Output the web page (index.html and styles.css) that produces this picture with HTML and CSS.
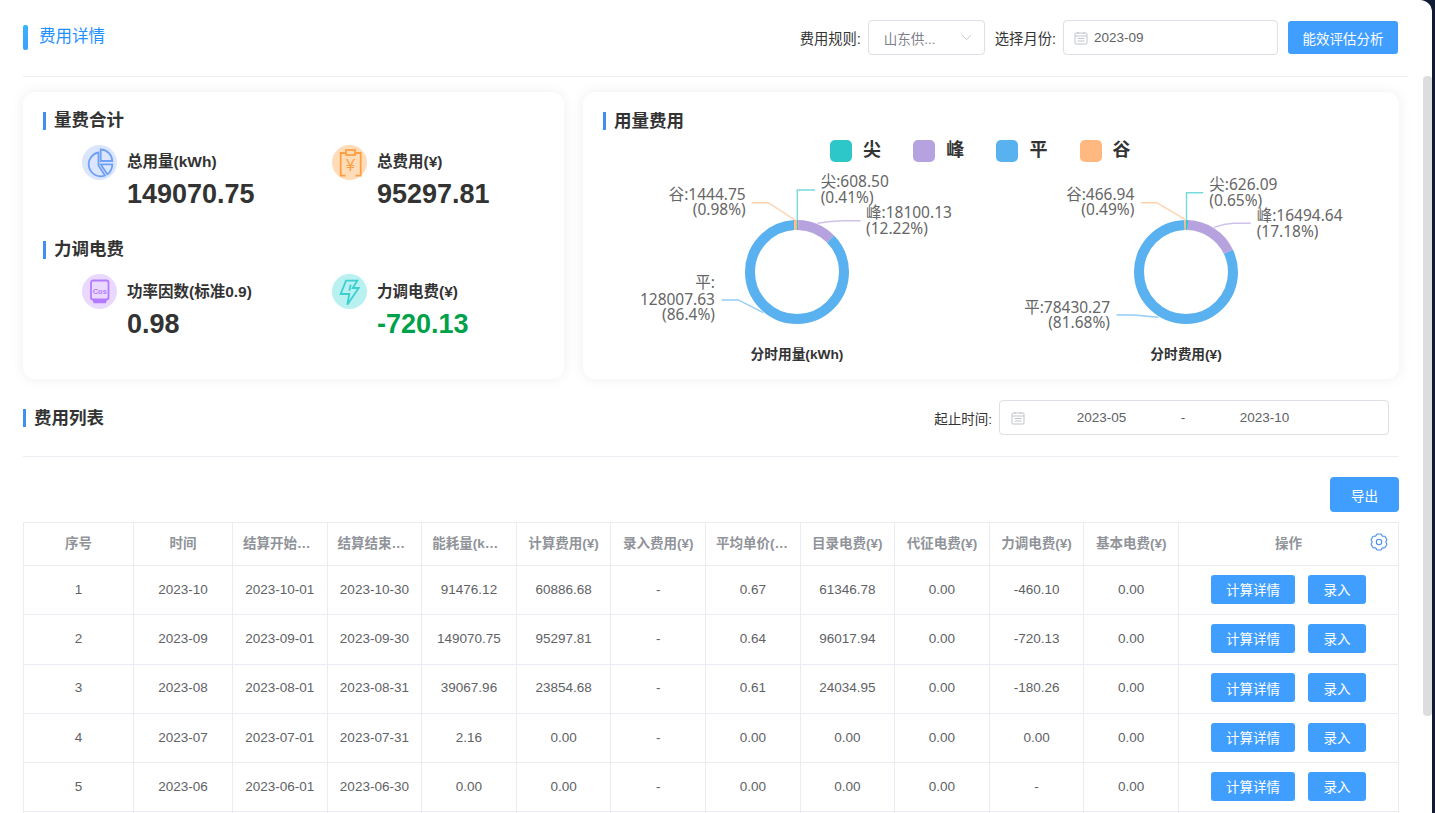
FILE: index.html
```html
<!DOCTYPE html>
<html lang="zh-CN">
<head>
    <meta charset="UTF-8">
    <title>费用详情</title>
    <link rel="stylesheet" href="styles.css">
</head>
<body>
<div class="page">
    <div class="scroll-thumb"></div>

    <div class="page-head">
        <div class="page-title">费用详情</div>
        <div class="head-tools">
            <span class="field-label">费用规则:</span>
            <div class="select-box">
                <span>山东供...</span>
                <svg class="chevron" viewBox="0 0 12 8"><polyline points="1,1 6,6.5 11,1"/></svg>
            </div>
            <span class="field-label label-next">选择月份:</span>
            <div class="month-box">
                <svg class="cal-icon" viewBox="0 0 14 14"><rect x="1" y="2" width="12" height="11" rx="1"/><path d="M1 5h12M4 1v2M10 1v2M3.5 7.5h7M3.5 10h7"/></svg>
                <span>2023-09</span>
            </div>
            <button class="btn btn-analyze">能效评估分析</button>
        </div>
    </div>

    <div class="cards">
        <div class="card card-left">
            <div class="sub-title">量费合计</div>
            <div class="stat-grid">
                <div class="stat">
                    <svg class="stat-icon icon-blue" viewBox="0 0 35 35">
                        <circle class="disc" cx="17.5" cy="17.5" r="17.5"/>
                        <path d="M16.5 7.5A12 12 0 1 0 23 30.5L16.5 20.5z"/>
                        <path d="M18.7 4.5A12 12 0 0 1 30.3 16H18.7z"/>
                        <path d="M18.7 19.3H30.3A12 12 0 0 1 25.3 29.3z"/>
                    </svg>
                    <div>
                        <div class="stat-label">总用量(kWh)</div>
                        <div class="stat-value">149070.75</div>
                    </div>
                </div>
                <div class="stat">
                    <svg class="stat-icon icon-orange" viewBox="0 0 35 35">
                        <circle class="disc" cx="17.5" cy="17.5" r="17.5"/>
                        <path d="M13.5 8H8.7V30.7H13.5M23.5 8H28.7V30.7H23.5"/>
                        <rect x="14" y="5" width="9" height="5"/>
                        <text class="icon-text yen" x="18.5" y="26">¥</text>
                    </svg>
                    <div>
                        <div class="stat-label">总费用(¥)</div>
                        <div class="stat-value">95297.81</div>
                    </div>
                </div>
            </div>

            <div class="sub-title sub-title-next">力调电费</div>
            <div class="stat-grid stat-grid-low">
                <div class="stat">
                    <svg class="stat-icon icon-purple" viewBox="0 0 35 35">
                        <circle class="disc" cx="17.5" cy="17.5" r="17.5"/>
                        <rect x="9" y="6.5" width="17.5" height="19" rx="2"/>
                        <path class="solid" d="M10.5 25.5h14.5l-1 3.8h-12.5z"/>
                        <text class="icon-text cos" x="17.8" y="19.5">Cos</text>
                    </svg>
                    <div>
                        <div class="stat-label">功率因数(标准0.9)</div>
                        <div class="stat-value">0.98</div>
                    </div>
                </div>
                <div class="stat">
                    <svg class="stat-icon icon-cyan" viewBox="0 0 35 35">
                        <circle class="disc" cx="17.5" cy="17.5" r="17.5"/>
                        <path d="M14 6.7H25.3L20.7 14H26.7L15.3 30.7 17.3 20H8.7z"/>
                        <path d="M18.7 10.7L17.3 16.7"/>
                    </svg>
                    <div>
                        <div class="stat-label">力调电费(¥)</div>
                        <div class="stat-value value-green">-720.13</div>
                    </div>
                </div>
            </div>
        </div>

        <div class="card card-right">
            <div class="sub-title title-low">用量费用</div>
            <div class="legend">
                <span class="legend-item"><i class="dot c-jian"></i>尖</span>
                <span class="legend-item"><i class="dot c-feng"></i>峰</span>
                <span class="legend-item"><i class="dot c-ping"></i>平</span>
                <span class="legend-item"><i class="dot c-gu"></i>谷</span>
            </div>
            <div class="charts">
                <svg class="pie" viewBox="0 0 389 200">
                    <g class="ring" transform="rotate(-90 194 106)">
                        <circle class="s-ping" cx="194" cy="106" r="47" pathLength="100" stroke-dasharray="86.4 100" stroke-dashoffset="-12.63"/>
                        <circle class="s-jian" cx="194" cy="106" r="47" pathLength="100" stroke-dasharray="0.41 100"/>
                        <circle class="s-feng" cx="194" cy="106" r="47" pathLength="100" stroke-dasharray="12.22 100" stroke-dashoffset="-0.41"/>
                        <circle class="s-gu" cx="194" cy="106" r="47" pathLength="100" stroke-dasharray="0.98 100" stroke-dashoffset="-99.03"/>
                    </g>
                    <path class="lead s-jian" d="M194.3 54V24H212"/>
                    <path class="lead s-gu" d="M192 54L165.3 36.7H148.7"/>
                    <path class="lead s-feng" d="M214.3 57.3Q228 55 240.3 54.7H257.7"/>
                    <path class="lead s-ping" d="M160.3 146.7L135.3 134H118.7"/>
                    <text class="pie-label" x="217.7" y="20.5">尖:608.50</text>
                    <text class="pie-label" x="217.7" y="36.8">(0.41%)</text>
                    <text class="pie-label to-end" x="142.7" y="34.1">谷:1444.75</text>
                    <text class="pie-label to-end" x="142.7" y="49.1">(0.98%)</text>
                    <text class="pie-label" x="263" y="52.1">峰:18100.13</text>
                    <text class="pie-label" x="263" y="68.1">(12.22%)</text>
                    <text class="pie-label to-end" x="112" y="121.5">平:</text>
                    <text class="pie-label to-end" x="112" y="138.8">128007.63</text>
                    <text class="pie-label to-end" x="112" y="153.8">(86.4%)</text>
                    <text class="pie-caption" x="194" y="193">分时用量(kWh)</text>
                </svg>
                <svg class="pie" viewBox="0 0 389 200">
                    <g class="ring" transform="rotate(-90 194 106)">
                        <circle class="s-ping" cx="194" cy="106" r="47" pathLength="100" stroke-dasharray="81.68 100" stroke-dashoffset="-17.83"/>
                        <circle class="s-jian" cx="194" cy="106" r="47" pathLength="100" stroke-dasharray="0.65 100"/>
                        <circle class="s-feng" cx="194" cy="106" r="47" pathLength="100" stroke-dasharray="17.18 100" stroke-dashoffset="-0.65"/>
                        <circle class="s-gu" cx="194" cy="106" r="47" pathLength="100" stroke-dasharray="0.49 100" stroke-dashoffset="-99.51"/>
                    </g>
                    <path class="lead s-jian" d="M194.5 54V26.7H211.3"/>
                    <path class="lead s-gu" d="M193 53.3L164.7 36.7H148.7"/>
                    <path class="lead s-feng" d="M222 61.3Q232 58 241.3 57.3H258.7"/>
                    <path class="lead s-ping" d="M166.3 151.3L141.3 149H124.7"/>
                    <text class="pie-label" x="217.3" y="24.1">尖:626.09</text>
                    <text class="pie-label" x="217.3" y="40.1">(0.65%)</text>
                    <text class="pie-label to-end" x="142.3" y="34.1">谷:466.94</text>
                    <text class="pie-label to-end" x="142.3" y="49.1">(0.49%)</text>
                    <text class="pie-label" x="264.7" y="54.8">峰:16494.64</text>
                    <text class="pie-label" x="264.7" y="70.8">(17.18%)</text>
                    <text class="pie-label to-end" x="118" y="146.5">平:78430.27</text>
                    <text class="pie-label to-end" x="118" y="162.1">(81.68%)</text>
                    <text class="pie-caption" x="194" y="193">分时费用(¥)</text>
                </svg>
            </div>
        </div>
    </div>

    <div class="list-head">
        <div class="sub-title title-low">费用列表</div>
        <div class="range-wrap">
            <span class="field-label">起止时间:</span>
            <div class="range-box">
                <svg class="cal-icon" viewBox="0 0 14 14"><rect x="1" y="2" width="12" height="11" rx="1"/><path d="M1 5h12M4 1v2M10 1v2M3.5 7.5h7M3.5 10h7"/></svg>
                <span class="range-val">2023-05</span>
                <span class="range-sep">-</span>
                <span class="range-val">2023-10</span>
            </div>
        </div>
    </div>

    <div class="list-tools">
        <button class="btn btn-export">导出</button>
    </div>

    <table class="fee-table">
        <thead>
            <tr>
                <th class="col-no">序号</th>
                <th class="col-time">时间</th>
                <th>结算开始时间</th>
                <th>结算结束时间</th>
                <th>能耗量(kWh)</th>
                <th>计算费用(¥)</th>
                <th>录入费用(¥)</th>
                <th>平均单价(元/kWh)</th>
                <th>目录电费(¥)</th>
                <th>代征电费(¥)</th>
                <th>力调电费(¥)</th>
                <th>基本电费(¥)</th>
                <th class="col-ops">
                    操作
                    <svg class="gear" viewBox="0 0 24 24">
                        <path d="M9.34 1.33H14.66L16.5 4.21 19.91 4.36 22.57 8.97 21 12 22.57 15.03 19.91 19.64 16.5 19.79 14.66 22.67H9.34L7.5 19.79 4.09 19.64 1.43 15.03 3 12 1.43 8.97 4.09 4.36 7.5 4.21z"/>
                        <circle cx="12" cy="12" r="3.6"/>
                    </svg>
                </th>
            </tr>
        </thead>
        <tbody>
            <tr>
                <td>1</td><td>2023-10</td><td>2023-10-01</td><td>2023-10-30</td><td>91476.12</td><td>60886.68</td><td>-</td><td>0.67</td><td>61346.78</td><td>0.00</td><td>-460.10</td><td>0.00</td>
                <td><button class="btn btn-row btn-calc">计算详情</button><button class="btn btn-row btn-input">录入</button></td>
            </tr>
            <tr>
                <td>2</td><td>2023-09</td><td>2023-09-01</td><td>2023-09-30</td><td>149070.75</td><td>95297.81</td><td>-</td><td>0.64</td><td>96017.94</td><td>0.00</td><td>-720.13</td><td>0.00</td>
                <td><button class="btn btn-row btn-calc">计算详情</button><button class="btn btn-row btn-input">录入</button></td>
            </tr>
            <tr>
                <td>3</td><td>2023-08</td><td>2023-08-01</td><td>2023-08-31</td><td>39067.96</td><td>23854.68</td><td>-</td><td>0.61</td><td>24034.95</td><td>0.00</td><td>-180.26</td><td>0.00</td>
                <td><button class="btn btn-row btn-calc">计算详情</button><button class="btn btn-row btn-input">录入</button></td>
            </tr>
            <tr>
                <td>4</td><td>2023-07</td><td>2023-07-01</td><td>2023-07-31</td><td>2.16</td><td>0.00</td><td>-</td><td>0.00</td><td>0.00</td><td>0.00</td><td>0.00</td><td>0.00</td>
                <td><button class="btn btn-row btn-calc">计算详情</button><button class="btn btn-row btn-input">录入</button></td>
            </tr>
            <tr>
                <td>5</td><td>2023-06</td><td>2023-06-01</td><td>2023-06-30</td><td>0.00</td><td>0.00</td><td>-</td><td>0.00</td><td>0.00</td><td>0.00</td><td>-</td><td>0.00</td>
                <td><button class="btn btn-row btn-calc">计算详情</button><button class="btn btn-row btn-input">录入</button></td>
            </tr>
            <tr>
                <td></td><td></td><td></td><td></td><td></td><td></td><td></td><td></td><td></td><td></td><td></td><td></td><td></td>
            </tr>
        </tbody>
    </table>
</div>
</body>
</html>
```

FILE: styles.css
```css
html, body {
    height: 100%;
    margin: 0;
    overflow: hidden;
}
body {
    background-color: #101a33;
    font-family: "Liberation Sans", "Noto Sans CJK SC", sans-serif;
    font-size: 13.5px;
    color: #606266;
}
.page {
    position: relative;
    width: 1432px;
    height: 813px;
    overflow: hidden;
    background-color: #fff;
    border-top-right-radius: 12px;
}
.scroll-thumb {
    position: absolute;
    top: 76px;
    right: 0;
    width: 9px;
    height: 640px;
    background-color: #ddd;
    border-radius: 4px;
}

/* top bar */
.page-head {
    display: flex;
    align-items: center;
    justify-content: space-between;
    box-sizing: border-box;
    width: 1385px;
    height: 77px;
    margin-left: 23px;
    padding: 0 10px 1px 0;
    border-bottom: 1px solid #eceef3;
}
.page-title {
    display: flex;
    align-items: flex-start;
    font-size: 16.5px;
    line-height: 22px;
    color: #1e90ff;
}
.page-title::before {
    content: "";
    width: 5px;
    height: 25px;
    margin-right: 11px;
    border-radius: 2px;
    background: linear-gradient(#36b4ff, #409eff);
}
.head-tools {
    display: flex;
    align-items: center;
}
.field-label {
    margin-right: 7px;
    font-size: 14.3px;
    color: #333;
    white-space: nowrap;
}
.label-next {
    margin-left: 10px;
}
.select-box, .month-box, .range-box {
    display: flex;
    align-items: center;
    box-sizing: border-box;
    height: 35px;
    border: 1px solid #dcdfe6;
    border-radius: 4px;
    color: #606266;
}
.select-box {
    justify-content: space-between;
    width: 117px;
    padding: 0 12px 0 15px;
    color: #7d8087;
}
.chevron {
    width: 11px;
    height: 7px;
    fill: none;
    stroke: #c0c4cc;
    stroke-width: 1;
}
.month-box {
    width: 215px;
    padding-left: 10px;
}
.cal-icon {
    flex: none;
    width: 14px;
    height: 14px;
    margin-right: 6px;
    fill: none;
    stroke: #c0c4cc;
    stroke-width: 1;
}
.btn {
    border: none;
    border-radius: 3px;
    background-color: #409eff;
    color: #fff;
    font: inherit;
    padding: 0;
    cursor: pointer;
}
.btn-analyze {
    width: 110px;
    height: 33px;
    margin-left: 10px;
}

/* summary cards */
.cards {
    display: flex;
    gap: 19px;
    margin: 15px 0 0 23px;
}
.card {
    box-sizing: border-box;
    height: 287px;
    padding: 20px;
    border-radius: 12px;
    background-color: #fff;
    box-shadow: 0 0 14px rgba(0, 0, 0, 0.07);
}
.card-left {
    width: 541px;
}
.card-right {
    width: 816px;
    padding-right: 18px;
}
.sub-title {
    box-sizing: border-box;
    height: 18px;
    padding-left: 8px;
    border-left: 3px solid #418ff0;
    font-size: 17.5px;
    font-weight: 700;
    line-height: 16px;
    color: #333;
}
.title-low {
    line-height: 18px;
}
.sub-title-next {
    margin-top: 32px;
}
.stat-grid {
    display: grid;
    grid-template-columns: 250px 1fr;
    margin: 15px 0 0 39px;
}
.stat {
    display: flex;
    gap: 10px;
}
.stat-icon {
    flex: none;
    width: 35px;
    height: 35px;
    fill: none;
    stroke-width: 1.8;
}
.stat-icon .disc {
    stroke: none;
}
.icon-blue { stroke: #6ea0f5; }
.icon-blue .disc { fill: #dbe6fd; }
.icon-orange { stroke: #ff9f43; }
.icon-orange .disc { fill: #ffdcb8; }
.icon-purple { stroke: #b57bff; }
.icon-purple .disc { fill: #ead9ff; }
.icon-purple .solid { fill: #b57bff; stroke: none; }
.icon-cyan { stroke: #3ccfd2; }
.icon-cyan .disc { fill: #b9f0f0; }
.icon-text {
    stroke: none;
    text-anchor: middle;
}
.yen {
    fill: #ff9f43;
    font-size: 16px;
}
.cos {
    fill: #b57bff;
    font-size: 7.5px;
    font-weight: 700;
}
.stat-label {
    margin-top: 7px;
    font-size: 15.5px;
    font-weight: 700;
    line-height: 20px;
    color: #333;
    white-space: nowrap;
}
.stat-grid-low .stat-label {
    margin-top: 8px;
}
.stat-value {
    margin-top: 7px;
    font-size: 27px;
    font-weight: 700;
    line-height: 30px;
    color: #333;
}
.value-green {
    color: #00a14b;
}

/* usage and cost pies */
.legend {
    display: flex;
    gap: 32.2px;
    height: 22px;
    margin: 10px 0 0 227px;
}
.legend-item {
    display: flex;
    align-items: flex-start;
    gap: 11px;
    font-size: 18px;
    font-weight: 700;
    line-height: 21px;
    color: #333;
}
.dot {
    width: 22px;
    height: 22px;
    border-radius: 5px;
}
.c-jian { background-color: #2ec7c9; }
.c-feng { background-color: #b6a2de; }
.c-ping { background-color: #5ab1ef; }
.c-gu { background-color: #ffb980; }
.charts {
    display: flex;
    margin-top: 4px;
}
.pie {
    flex: none;
    width: 389px;
    height: 200px;
    overflow: visible;
}
.ring circle {
    fill: none;
    stroke-width: 10;
}
.s-jian { stroke: #2ec7c9; }
.s-feng { stroke: #b6a2de; }
.s-ping { stroke: #5ab1ef; }
.s-gu { stroke: #ffb980; }
.lead {
    fill: none;
    stroke-width: 1.4;
    opacity: 0.65;
}
.pie-label {
    font-family: "Noto Sans", "Noto Sans CJK SC", sans-serif;
    font-size: 15.5px;
    fill: #666;
}
.to-end {
    text-anchor: end;
}
.pie-caption {
    font-size: 13.7px;
    font-weight: 700;
    text-anchor: middle;
    fill: #333;
}

/* fee list */
.list-head {
    display: flex;
    align-items: center;
    justify-content: space-between;
    box-sizing: border-box;
    width: 1376px;
    margin-left: 23px;
    padding: 21px 10px 21px 0;
    border-bottom: 1px solid #eceef3;
}
.range-wrap {
    display: flex;
    align-items: center;
}
.range-wrap .field-label {
    font-size: 13.5px;
}
.range-box {
    width: 390px;
    padding-left: 11px;
}
.range-box .cal-icon {
    margin-right: 0;
}
.range-val {
    width: 153px;
    text-align: center;
}
.range-sep {
    width: 10px;
    text-align: center;
}
.list-tools {
    display: flex;
    justify-content: flex-end;
    width: 1376px;
    margin: 20px 0 10px 23px;
}
.btn-export {
    width: 69px;
    height: 35px;
    border-radius: 4px;
}
.fee-table {
    width: 1376px;
    margin-left: 23px;
    border-collapse: collapse;
    table-layout: fixed;
}
.fee-table th, .fee-table td {
    box-sizing: border-box;
    padding: 0 10px 2px;
    border: 1px solid #e9ecf4;
    text-align: center;
    white-space: nowrap;
    overflow: hidden;
    text-overflow: ellipsis;
}
.fee-table th {
    height: 43px;
    padding-bottom: 4px;
    font-weight: 700;
    color: #909399;
}
.fee-table td {
    height: 49.3px;
}
.col-no { width: 110px; }
.col-time { width: 99px; }
.col-ops {
    position: relative;
    width: 220px;
}
.gear {
    position: absolute;
    top: 10px;
    right: 10px;
    width: 18px;
    height: 18px;
    fill: none;
    stroke: #4a90f5;
    stroke-width: 1.5;
    stroke-linejoin: round;
}
.btn-row {
    height: 29px;
    vertical-align: middle;
}
.btn-calc {
    width: 84px;
}
.btn-input {
    width: 58px;
    margin-left: 13px;
}
```
